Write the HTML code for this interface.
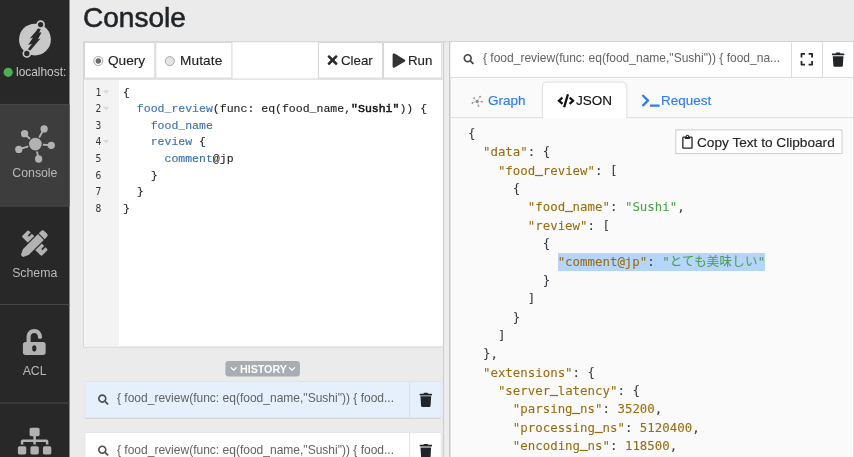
<!DOCTYPE html>
<html><head><meta charset="utf-8">
<style>
*{box-sizing:border-box;margin:0;padding:0}
html,body{width:854px;height:457px;overflow:hidden;background:#ebebeb;font-family:"Liberation Sans","Noto Sans CJK JP",sans-serif;color:#212529}
svg{position:absolute;overflow:hidden}
.t,.ln,.cl,.jl,h1{will-change:transform}
.t{position:absolute;white-space:nowrap;line-height:16px;height:16px}
.sl{color:#b9b9b9;font-size:12.3px}
h1{position:absolute;left:83.0px;top:0px;font-size:28.05px;font-weight:400;color:#212529;line-height:36px;-webkit-text-stroke:0.55px #212529}
.b{font-size:13.4px;color:#212529}
.tb{font-size:13.65px;-webkit-text-stroke:0.15px}
.tc{font-size:13.3px;-webkit-text-stroke:0.15px}
.tt{font-size:13.5px;-webkit-text-stroke:0.15px}
.q{font-size:12.03px;color:#636363}
.ln{position:absolute;left:84px;width:17.3px;text-align:right;font-family:"DejaVu Sans Mono",monospace;font-size:9.6px;color:#333;line-height:16.53px;height:16.53px}
.cl{-webkit-text-stroke:0.12px;position:absolute;left:123.3px;white-space:pre;font-family:"Liberation Mono",monospace;font-size:11.535px;line-height:16.53px;height:16.53px;color:#222}
.cl b{font-weight:400;color:#111;-webkit-text-stroke:0.5px}
.cl i{font-style:normal;color:#3a6fae}
.jl{position:absolute;white-space:pre;font-family:"DejaVu Sans Mono","Noto Sans CJK JP",monospace;font-size:12.42px;line-height:18.37px;height:18.37px;color:#383a42;left:468.2px;-webkit-text-stroke:0.08px}
.jl u{text-decoration:none;color:#9a6c0c}
.jl s{text-decoration:none;color:#50a14f}
.jl em{font-style:normal;position:relative;top:-1.4px}
.jl b{font-weight:400;position:relative;top:-1.7px;-webkit-text-stroke:0.7px}
.jl mark{background:#b5d5fb;color:inherit;display:inline-block;height:18.37px}
</style></head><body>
<svg width="854" height="457" viewBox="0 0 854 457" style="left:0;top:0"><rect x="0.00" y="0.00" width="69.50" height="457.00" fill="#282828"/><rect x="0.00" y="104.90" width="69.50" height="101.10" fill="#3d3d3d"/><rect x="0.00" y="103.90" width="69.50" height="1.00" fill="#4a4a4a"/><rect x="0.00" y="205.50" width="69.50" height="1.00" fill="#4a4a4a"/><rect x="0.00" y="304.10" width="69.50" height="1.00" fill="#4a4a4a"/><rect x="0.00" y="402.50" width="69.50" height="1.00" fill="#4a4a4a"/><g transform="translate(34.96 39.6)"><circle r="15.9" fill="#c8c8c8"/><path d="M4.3 -13.2 L6.6 -12.6 L4.2 -6.9 L6.6 -7.4 L3.0 -0.4 L5.6 -1.2 L-6.2 12.6 L-8.2 11.4 L-3.0 4.2 L-6.8 5.5 L-2.0 -2.0 L-5.2 -1.0 L1.4 -8.8 Z" fill="#282828"/><circle cx="5.65" cy="-15.0" r="3.5" fill="#282828" stroke="#c8c8c8" stroke-width="1.7"/><circle cx="-8.15" cy="13.9" r="3.5" fill="#282828" stroke="#c8c8c8" stroke-width="1.7"/></g><circle cx="8.2" cy="72.3" r="4.6" fill="#4caf50"/><g fill="#b2b2b2" stroke="#b2b2b2" stroke-width="1.9"><line x1="35.4" y1="144.1" x2="44.1" y2="128.9"/><circle cx="44.1" cy="128.9" r="2.7"/><line x1="35.4" y1="144.1" x2="24.6" y2="133.7"/><circle cx="24.6" cy="133.7" r="2.7"/><line x1="35.4" y1="144.1" x2="18.8" y2="149.4"/><circle cx="18.8" cy="149.4" r="2.7"/><line x1="35.4" y1="144.1" x2="51.3" y2="145.3"/><circle cx="51.3" cy="145.3" r="2.7"/><line x1="35.4" y1="144.1" x2="38.6" y2="159.0"/><circle cx="38.6" cy="159.0" r="2.7"/><circle cx="35.4" cy="144.1" r="7.6" fill="#3d3d3d" stroke="none"/><circle cx="35.4" cy="144.1" r="5.4"/></g><g transform="translate(34.8 243.1) rotate(-45)"><rect x="-4.6" y="-14.0" width="9.2" height="28.0" rx="1.4" fill="#b2b2b2"/><rect x="0.4" y="-10.4" width="4.5" height="1.7" fill="#282828"/><rect x="0.4" y="8.7" width="4.5" height="1.7" fill="#282828"/></g><g transform="translate(34.8 243.1) rotate(45)"><rect x="-5.3" y="-16" width="10.600" height="30" fill="#282828"/><path d="M-4.1 -9.7 v-3.2 a2.3 2.3 0 0 1 2.3 -2.3 h3.600 a2.3 2.3 0 0 1 2.3 2.3 v3.2z M-4.1 -8.600 h8.2 v21.4 l-2.600 5.2 q-1.500 0.800 -3.000 0 l-2.600 -5.2z" fill="#b2b2b2"/></g><path transform="translate(22.90 328.90) scale(0.05078)" fill="#b2b2b2" fill-rule="evenodd" d="M400 256H152V152.900c0-39.600 31.700-72.500 71.300-72.900 40-.4 72.700 32.100 72.700 72v16c0 13.300 10.700 24 24 24h32c13.300 0 24-10.700 24-24v-16C376 68 307.500-.3 223.500 0 139.500.3 72 69.500 72 153.500V256H48c-26.500 0-48 21.500-48 48v160c0 26.500 21.500 48 48 48h352c26.500 0 48-21.500 48-48V304c0-26.500-21.500-48-48-48zM264 408c0 22.100-17.900 40-40 40s-40-17.900-40-40v-48c0-22.100 17.900-40 40-40s40 17.900 40 40v48z"/><path transform="translate(17.90 427.80) scale(0.05219)" fill="#b2b2b2" d="M128 352H32c-17.670 0-32 14.330-32 32v96c0 17.670 14.330 32 32 32h96c17.670 0 32-14.330 32-32v-96c0-17.670-14.330-32-32-32zm-24-80h192v48h48v-48h192v48h48v-57.590c0-21.170-17.230-38.410-38.410-38.410H344v-64h40c17.670 0 32-14.330 32-32V32c0-17.670-14.330-32-32-32H256c-17.670 0-32 14.330-32 32v96c0 17.670 14.330 32 32 32h40v64H94.410C73.230 224 56 241.230 56 262.410V320h48v-48zm264 80h-96c-17.670 0-32 14.330-32 32v96c0 17.670 14.330 32 32 32h96c17.670 0 32-14.330 32-32v-96c0-17.670-14.330-32-32-32zm240 0h-96c-17.670 0-32 14.330-32 32v96c0 17.670 14.330 32 32 32h96c17.670 0 32-14.330 32-32v-96c0-17.670-14.330-32-32-32z"/><rect x="83.60" y="41.70" width="359.90" height="305.30" fill="#fff" stroke="#d3d3d3" stroke-width="1.0"/><rect x="442.90" y="41.20" width="1.30" height="420.80" fill="#cecece"/><rect x="84.10" y="79.40" width="34.90" height="267.10" fill="#f3f3f3"/><rect x="83.10" y="78.60" width="359.90" height="1.00" fill="#d3d3d3"/><rect x="84.47" y="42.58" width="70.35" height="35.55" fill="#fff" stroke="#d3d3d3" stroke-width="0.95"/><rect x="155.78" y="42.58" width="76.15" height="35.55" fill="#fff" stroke="#d3d3d3" stroke-width="0.95"/><rect x="318.38" y="42.58" width="64.25" height="35.55" fill="#fff" stroke="#d3d3d3" stroke-width="0.95"/><rect x="383.58" y="42.58" width="58.25" height="35.55" fill="#fff" stroke="#d3d3d3" stroke-width="0.95"/><circle cx="98.3" cy="61.0" r="4.5" fill="#fff" stroke="#a2a2a2" stroke-width="1"/><circle cx="98.3" cy="61.0" r="2.7" fill="#6a6a6a"/><circle cx="169.8" cy="61.1" r="4.5" fill="#e4e4e4" stroke="#a8a8a8" stroke-width="1"/><path transform="translate(327.60 52.90) scale(0.02813)" fill="#2a2a2a" d="M242.72 256l100.07-100.07c12.28-12.28 12.28-32.19 0-44.48l-22.24-22.24c-12.28-12.28-32.19-12.28-44.48 0L176 189.28 75.93 89.21c-12.28-12.28-32.19-12.28-44.48 0L9.21 111.45c-12.28 12.28-12.28 32.19 0 44.48L109.28 256 9.21 356.07c-12.28 12.28-12.28 32.19 0 44.48l22.24 22.24c12.28 12.28 32.2 12.28 44.48 0L176 322.72l100.07 100.07c12.28 12.28 32.2 12.28 44.48 0l22.24-22.24c12.28-12.28 12.28-32.19 0-44.48L242.72 256z"/><path transform="translate(392.60 53.40) scale(0.02813)" fill="#333" d="M424.4 214.7L72.4 6.6C43.8-10.3 0 6.1 0 47.900V464c0 37.500 40.700 60.100 72.400 41.300l352-208c31.400-18.500 31.500-64.100 0-82.600z"/><path d="M102.9 90.30 h6.4 l-3.2 3.600z" fill="#dadada"/><path d="M102.9 106.83 h6.4 l-3.2 3.600z" fill="#dadada"/><path d="M102.9 139.89 h6.4 l-3.2 3.600z" fill="#dadada"/><rect x="225.40" y="361.10" width="74.50" height="15.40" fill="#a9adb3" stroke="none" stroke-width="0" rx="3"/><path d="M231.1 367.6 l2.6 2.600 l2.6 -2.600" fill="none" stroke="#fff" stroke-width="1.25" stroke-linecap="round" stroke-linejoin="round"/><path d="M289.4 367.6 l2.6 2.600 l2.6 -2.600" fill="none" stroke="#fff" stroke-width="1.25" stroke-linecap="round" stroke-linejoin="round"/><rect x="84.90" y="382.60" width="356.10" height="36.20" fill="#cfcfcf" rx="1.2"/><rect x="85.30" y="381.10" width="355.50" height="36.50" fill="#dcdfe3"/><rect x="85.30" y="381.70" width="355.50" height="35.90" fill="#e6f0fd"/><rect x="409.20" y="381.60" width="0.90" height="36.00" fill="#d9dde3"/><path transform="translate(98.00 394.30) scale(0.02070)" fill="#505050" d="M505 442.7L405.3 343c-4.5-4.5-10.6-7-17-7H372c27.6-35.3 44-79.7 44-128C416 93.1 322.9 0 208 0S0 93.1 0 208s93.1 208 208 208c48.3 0 92.7-16.4 128-44v16.3c0 6.4 2.5 12.5 7 17l99.700 99.700c9.400 9.400 24.600 9.400 33.900 0l28.300-28.300c9.400-9.400 9.400-24.600.1-34zM208 336c-70.700 0-128-57.200-128-128 0-70.700 57.200-128 128-128 70.700 0 128 57.200 128 128 0 70.700-57.200 128-128 128z"/><path transform="translate(419.60 392.80) scale(0.02773)" fill="#212529" d="M432 32H312l-9.4-18.7A24 24 0 0 0 281.1 0H166.8a23.72 23.72 0 0 0-21.4 13.3L136 32H16A16 16 0 0 0 0 48v32a16 16 0 0 0 16 16h416a16 16 0 0 0 16-16V48a16 16 0 0 0-16-16zM53.2 467a48 48 0 0 0 47.9 45h245.8a48 48 0 0 0 47.9-45L416 128H32z"/><rect x="84.90" y="433.70" width="356.10" height="36.20" fill="#cfcfcf" rx="1.2"/><rect x="85.30" y="432.20" width="355.50" height="36.50" fill="#dcdfe3"/><rect x="85.30" y="432.80" width="355.50" height="35.90" fill="#fff"/><rect x="409.20" y="432.70" width="0.90" height="36.00" fill="#d9dde3"/><path transform="translate(98.00 445.40) scale(0.02070)" fill="#505050" d="M505 442.7L405.3 343c-4.5-4.5-10.6-7-17-7H372c27.6-35.3 44-79.7 44-128C416 93.1 322.9 0 208 0S0 93.1 0 208s93.1 208 208 208c48.3 0 92.7-16.4 128-44v16.3c0 6.4 2.5 12.5 7 17l99.700 99.700c9.400 9.400 24.600 9.400 33.900 0l28.300-28.300c9.400-9.400 9.400-24.600.1-34zM208 336c-70.700 0-128-57.200-128-128 0-70.700 57.200-128 128-128 70.700 0 128 57.200 128 128 0 70.700-57.200 128-128 128z"/><path transform="translate(419.60 443.90) scale(0.02773)" fill="#212529" d="M432 32H312l-9.4-18.7A24 24 0 0 0 281.1 0H166.8a23.72 23.72 0 0 0-21.4 13.3L136 32H16A16 16 0 0 0 0 48v32a16 16 0 0 0 16 16h416a16 16 0 0 0 16-16V48a16 16 0 0 0-16-16zM53.2 467a48 48 0 0 0 47.9 45h245.8a48 48 0 0 0 47.9-45L416 128H32z"/><rect x="444.20" y="41.20" width="4.90" height="420.80" fill="#ededed"/><rect x="444.20" y="41.20" width="4.90" height="1.00" fill="#d6d6d6"/><rect x="449.00" y="41.20" width="405.00" height="420.80" fill="#c9c9c9"/><rect x="450.40" y="41.20" width="403.60" height="1.00" fill="#d6d6d6"/><rect x="853.20" y="41.20" width="0.80" height="420.80" fill="#d6d6d6"/><rect x="450.50" y="42.20" width="402.70" height="419.80" fill="#fafafa"/><rect x="450.50" y="42.20" width="402.70" height="34.90" fill="#fff"/><rect x="450.50" y="77.10" width="402.70" height="0.90" fill="#d9d9d9"/><rect x="791.00" y="42.20" width="0.90" height="34.90" fill="#d9d9d9"/><rect x="822.00" y="42.20" width="0.90" height="34.90" fill="#d9d9d9"/><path transform="translate(463.50 54.00) scale(0.02031)" fill="#484848" d="M505 442.7L405.3 343c-4.5-4.5-10.6-7-17-7H372c27.6-35.3 44-79.7 44-128C416 93.1 322.9 0 208 0S0 93.1 0 208s93.1 208 208 208c48.3 0 92.7-16.4 128-44v16.3c0 6.4 2.5 12.5 7 17l99.700 99.700c9.400 9.400 24.600 9.400 33.900 0l28.300-28.300c9.400-9.400 9.400-24.600.1-34zM208 336c-70.700 0-128-57.200-128-128 0-70.700 57.200-128 128-128 70.700 0 128 57.200 128 128 0 70.700-57.200 128-128 128z"/><path transform="translate(800.60 52.20) scale(0.02768)" fill="#212529" d="M0 180V56c0-13.3 10.7-24 24-24h124c6.6 0 12 5.4 12 12v40c0 6.6-5.4 12-12 12H64v84c0 6.6-5.4 12-12 12H12c-6.6 0-12-5.4-12-12zM288 44v40c0 6.6 5.4 12 12 12h84v84c0 6.6 5.4 12 12 12h40c6.6 0 12-5.4 12-12V56c0-13.3-10.7-24-24-24H300c-6.6 0-12 5.4-12 12zm148 276h-40c-6.6 0-12 5.4-12 12v84h-84c-6.6 0-12 5.4-12 12v40c0 6.6 5.4 12 12 12h124c13.3 0 24-10.7 24-24V332c0-6.6-5.4-12-12-12zM160 468v-40c0-6.6-5.4-12-12-12H64v-84c0-6.6-5.4-12-12-12H12c-6.6 0-12 5.4-12 12v124c0 13.3 10.7 24 24 24h124c6.6 0 12-5.4 12-12z"/><path transform="translate(831.90 52.60) scale(0.02773)" fill="#212529" d="M432 32H312l-9.4-18.7A24 24 0 0 0 281.1 0H166.8a23.72 23.72 0 0 0-21.4 13.3L136 32H16A16 16 0 0 0 0 48v32a16 16 0 0 0 16 16h416a16 16 0 0 0 16-16V48a16 16 0 0 0-16-16zM53.2 467a48 48 0 0 0 47.9 45h245.8a48 48 0 0 0 47.9-45L416 128H32z"/><rect x="450.50" y="117.10" width="402.70" height="1.00" fill="#dedede"/><path d="M542.4 118.2 V86 a3.900 3.900 0 0 1 3.900 -3.900 H622.900 a3.900 3.900 0 0 1 3.900 3.900 V118.2" fill="#fff" stroke="#dedede" stroke-width="1"/><g stroke="#9c9c9c" stroke-width="0.55" fill="#8c8c8c"><line x1="477.2" y1="101.4" x2="480.09999999999997" y2="96.65"/><circle cx="480.09999999999997" cy="96.65" r="0.85" stroke="none"/><line x1="477.2" y1="101.4" x2="474.09999999999997" y2="98.10000000000001"/><circle cx="474.09999999999997" cy="98.10000000000001" r="0.85" stroke="none"/><line x1="477.2" y1="101.4" x2="472.4" y2="102.9"/><circle cx="472.4" cy="102.9" r="0.85" stroke="none"/><line x1="477.2" y1="101.4" x2="482.0" y2="101.7"/><circle cx="482.0" cy="101.7" r="0.85" stroke="none"/><line x1="477.2" y1="101.4" x2="478.5" y2="105.9"/><circle cx="478.5" cy="105.9" r="0.85" stroke="none"/><circle cx="477.2" cy="101.4" r="2.2" fill="#fafafa" stroke="none"/><circle cx="477.2" cy="101.4" r="1.65" stroke="none"/></g><path transform="translate(557.50 93.90) scale(0.02672)" fill="#111" d="M278.9 511.5l-61-17.7c-6.4-1.8-10-8.5-8.2-14.9L346.2 8.7c1.8-6.4 8.5-10 14.9-8.2l61 17.7c6.4 1.8 10 8.5 8.2 14.9L293.8 503.3c-1.9 6.4-8.5 10.1-14.9 8.2zm-114-112.2l43.5-46.4c4.6-4.9 4.3-12.7-.8-17.2L117 256l90.6-79.7c5.1-4.5 5.5-12.3.8-17.2l-43.5-46.4c-4.5-4.8-12.1-5.1-17-.5L3.8 247.2c-5.1 4.7-5.1 12.8 0 17.5l144.1 135.1c4.9 4.6 12.5 4.4 17-.5zm327.2.6l144.1-135.1c5.1-4.7 5.1-12.8 0-17.5L492.1 112.1c-4.8-4.5-12.4-4.3-17 .5L431.6 159c-4.6 4.9-4.3 12.7.8 17.2L523 256l-90.6 79.7c-5.1 4.5-5.5 12.3-.8 17.2l43.5 46.4c4.5 4.9 12.1 5.100 17 .6z"/><path transform="translate(641.90 93.40) scale(0.02781)" fill="#2d7bf4" d="M257.981 272.971L63.638 467.314c-9.373 9.373-24.569 9.373-33.941 0L7.029 444.647c-9.357-9.357-9.375-24.522-.04-33.901L161.011 256 6.99 101.255c-9.335-9.379-9.317-24.544.04-33.901l22.667-22.667c9.373-9.373 24.569-9.373 33.941 0L257.981 239.03c9.373 9.372 9.373 24.568 0 33.941zM640 456v-32c0-13.255-10.745-24-24-24H312c-13.255 0-24 10.745-24 24v32c0 13.255 10.745 24 24 24h304c13.255 0 24-10.745 24-24z"/><rect x="675.80" y="129.90" width="166.20" height="23.70" fill="#fff" stroke="#cdcdcd" stroke-width="1.0"/><path transform="translate(682.20 134.70) scale(0.02734)" fill="#212529" d="M336 64h-80c0-35.300-28.700-64-64-64s-64 28.700-64 64H48C21.500 64 0 85.500 0 112v352c0 26.500 21.500 48 48 48h288c26.500 0 48-21.500 48-48V112c0-26.500-21.500-48-48-48zM192 40c13.300 0 24 10.700 24 24s-10.700 24-24 24-24-10.700-24-24 10.700-24 24-24zm144 418c0 3.300-2.700 6-6 6H54c-3.300 0-6-2.700-6-6V118c0-3.300 2.700-6 6-6h42v36c0 6.600 5.400 12 12 12h168c6.600 0 12-5.400 12-12v-36h42c3.300 0 6 2.700 6 6z"/></svg>
<div class="t sl" style="left:15.8px;top:63.9px;width:53.7px;overflow:hidden;color:#c6c6c6;font-size:11.9px">localhost:</div>
<div class="t sl" style="left:0;width:69.8px;text-align:center;top:165.4px">Console</div>
<div class="t sl" style="left:0;width:69.4px;text-align:center;top:264.9px">Schema</div>
<div class="t sl" style="left:0;width:69.2px;text-align:center;top:363.0px">ACL</div>
<h1>Console</h1>
<div class="t b tb" style="left:107.6px;top:52.5px">Query</div>
<div class="t b tb" style="left:179.6px;top:52.5px;letter-spacing:0.12px">Mutate</div>
<div class="t b tc" style="left:341px;top:52.7px">Clear</div>
<div class="t b tc" style="left:408.4px;top:52.7px">Run</div>
<div class="ln" style="top:84.90px">1</div><div class="cl" style="top:84.90px">{</div><div class="ln" style="top:101.43px">2</div><div class="cl" style="top:101.43px">  <i>food_review</i>(func: eq(food_name,<b>"Sushi"</b>)) {</div><div class="ln" style="top:117.96px">3</div><div class="cl" style="top:117.96px">    <i>food_name</i></div><div class="ln" style="top:134.49px">4</div><div class="cl" style="top:134.49px">    <i>review</i> {</div><div class="ln" style="top:151.02px">5</div><div class="cl" style="top:151.02px">      <i>comment</i>@jp</div><div class="ln" style="top:167.55px">6</div><div class="cl" style="top:167.55px">    }</div><div class="ln" style="top:184.08px">7</div><div class="cl" style="top:184.08px">  }</div><div class="ln" style="top:200.61px">8</div><div class="cl" style="top:200.61px">}</div>
<div class="t" style="left:239.6px;top:360.8px;font-size:10.68px;font-weight:700;color:#fff">HISTORY</div>
<div class="t q" style="left:117.3px;top:390.4px">{ food_review(func: eq(food_name,"Sushi")) { food...</div>
<div class="t q" style="left:117.3px;top:441.5px">{ food_review(func: eq(food_name,"Sushi")) { food...</div>
<div class="t q" style="left:482.8px;top:50px">{ food_review(func: eq(food_name,"Sushi")) { food_na...</div>
<div class="t b tt" style="left:488.2px;top:92.6px;color:#2d7bf4">Graph</div>
<div class="t b tt" style="left:575.9px;top:92.6px;color:#111">JSON</div>
<div class="t b tt" style="left:661.0px;top:92.6px;color:#2d7bf4">Request</div>
<div class="t b tb" style="left:696.5px;top:134.6px">Copy Text to Clipboard</div>
<div class="jl" style="top:124.90px"><em>{</em></div><div class="jl" style="top:143.27px">  <u>"data"</u>: <em>{</em></div><div class="jl" style="top:161.64px">    <u>"food<b>_</b>review"</u>: <em>[</em></div><div class="jl" style="top:180.01px">      <em>{</em></div><div class="jl" style="top:198.38px">        <u>"food<b>_</b>name"</u>: <s>"Sushi"</s>,</div><div class="jl" style="top:216.75px">        <u>"review"</u>: <em>[</em></div><div class="jl" style="top:235.12px">          <em>{</em></div><div class="jl" style="top:253.49px">            <mark><u>"comment@jp"</u>: <s>"<span style="letter-spacing:0.3px">とても美味しい</span>"</s></mark></div><div class="jl" style="top:271.86px">          <em>}</em></div><div class="jl" style="top:290.23px">        <em>]</em></div><div class="jl" style="top:308.60px">      <em>}</em></div><div class="jl" style="top:326.97px">    <em>]</em></div><div class="jl" style="top:345.34px">  <em>}</em>,</div><div class="jl" style="top:363.71px">  <u>"extensions"</u>: <em>{</em></div><div class="jl" style="top:382.08px">    <u>"server<b>_</b>latency"</u>: <em>{</em></div><div class="jl" style="top:400.45px">      <u>"parsing<b>_</b>ns"</u>: <u>35200</u>,</div><div class="jl" style="top:418.82px">      <u>"processing<b>_</b>ns"</u>: <u>5120400</u>,</div><div class="jl" style="top:437.19px">      <u>"encoding<b>_</b>ns"</u>: <u>118500</u>,</div><div class="jl" style="top:455.56px">      <u>"assign<b>_</b>timestamp<b>_</b>ns"</u>: <u>581600</u>,</div>
</body></html>
